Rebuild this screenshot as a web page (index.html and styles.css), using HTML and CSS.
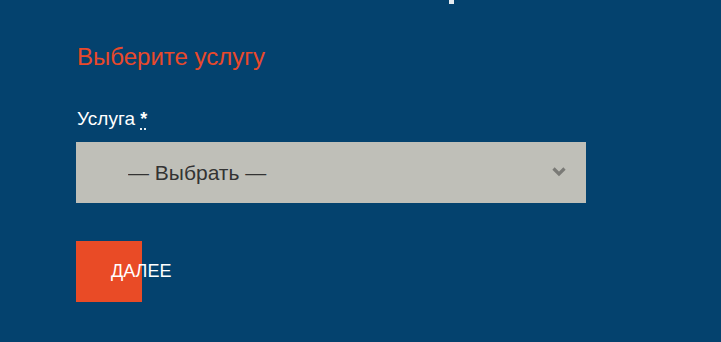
FILE: index.html
```html
<!DOCTYPE html>
<html lang="ru">
<head>
  <meta charset="UTF-8">
  <meta name="viewport" content="width=device-width, initial-scale=1">
  <title>Выберите услугу</title>
  <link rel="stylesheet" href="styles.css">
</head>
<body>

<div class="top-edge"></div>

<main class="booking">
  <h2 class="step-title">Выберите услугу</h2>

  <form class="step-form">
    <label class="field-label" for="service">Услуга <abbr title="обязательно">*</abbr></label>
    <div class="select-wrap">
      <select id="service" class="service-select">
        <option>— Выбрать —</option>
      </select>
      <svg class="chevron" width="14" height="10" viewBox="0 0 14 10">
        <path d="M1.5 1.5 L7 7 L12.5 1.5" fill="none" stroke="#7a7a76" stroke-width="3.2"/>
      </svg>
    </div>

    <button type="button" class="next-btn"><span>ДАЛЕЕ</span></button>
  </form>
</main>

</body>
</html>
```

FILE: styles.css
```css
* {
  margin: 0;
  padding: 0;
  box-sizing: border-box;
}

body {
  font-family: 'Liberation Sans', Arial, sans-serif;
  background-color: #04426e;
  color: #fff;
  height: 342px;
  overflow: hidden;
}

.top-edge {
  width: 5px;
  height: 4px;
  margin-left: 449px;
  background-color: #e6ebf0;
}

.booking {
  padding: 0 76px;
}

.step-title {
  color: #e9492b;
  font-size: 24px;
  font-weight: 400;
  margin-top: 38px;
  margin-left: 1px;
  line-height: 30px;
}

.field-label {
  display: block;
  margin-top: 36px;
  margin-left: 1px;
  font-size: 19px;
  line-height: 22px;
}

.field-label abbr {
  text-decoration: underline dotted;
  text-underline-offset: 4px;
  font-size: 18px;
  font-weight: 700;
}

.select-wrap {
  position: relative;
  width: 510px;
  margin-top: 12px;
}

.service-select {
  appearance: none;
  width: 100%;
  height: 61px;
  border: none;
  border-radius: 0;
  background-color: #bfbfb8;
  color: #333;
  font-family: inherit;
  font-size: 21px;
  padding-left: 52px;
}

.chevron {
  position: absolute;
  right: 20px;
  top: 25px;
}

.next-btn {
  display: block;
  width: 66px;
  height: 61px;
  margin-top: 38px;
  background-color: #e94b26;
  border: none;
  color: #fff;
  font-family: inherit;
  font-size: 18px;
  text-align: left;
  white-space: nowrap;
  overflow: visible;
  padding-left: 35px;
}
```
